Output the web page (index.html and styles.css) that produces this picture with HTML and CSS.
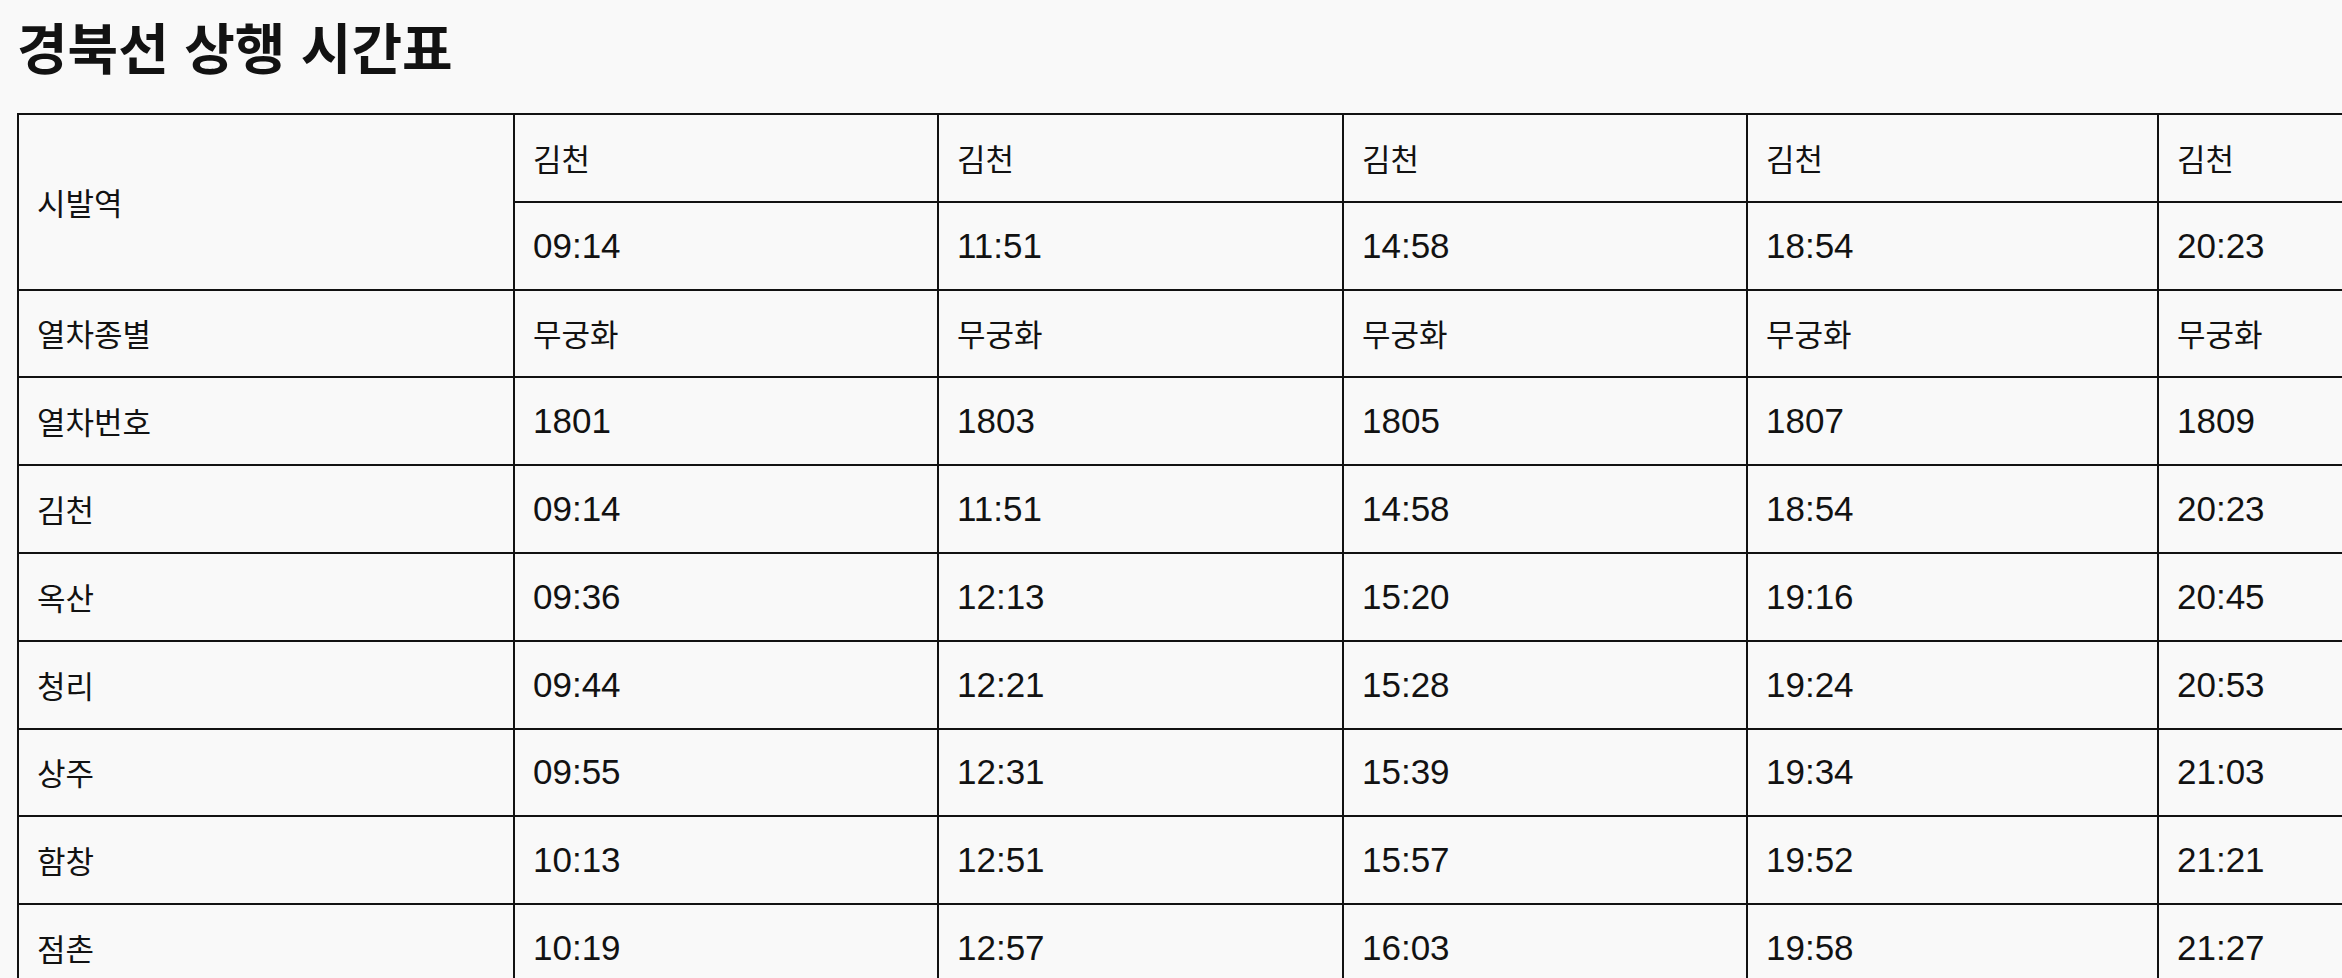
FILE: index.html
```html
<!DOCTYPE html>
<html lang="ko">
<head>
<meta charset="utf-8">
<title>경북선 상행 시간표</title>
<link rel="stylesheet" href="styles.css">
</head>
<body>
<main class="page">
  <h1 class="title">경북선 상행 시간표</h1>
  <div class="table-wrap">
    <table class="timetable">
      <colgroup>
        <col class="c1"><col class="c2"><col class="c3"><col class="c4"><col class="c5"><col class="c6">
      </colgroup>
      <tbody>
        <tr><td rowspan="2">시발역</td><td>김천</td><td>김천</td><td>김천</td><td>김천</td><td>김천</td></tr>
        <tr><td class="n">09:14</td><td class="n">11:51</td><td class="n">14:58</td><td class="n">18:54</td><td class="n">20:23</td></tr>
        <tr><td>열차종별</td><td>무궁화</td><td>무궁화</td><td>무궁화</td><td>무궁화</td><td>무궁화</td></tr>
        <tr><td>열차번호</td><td class="n">1801</td><td class="n">1803</td><td class="n">1805</td><td class="n">1807</td><td class="n">1809</td></tr>
        <tr><td>김천</td><td class="n">09:14</td><td class="n">11:51</td><td class="n">14:58</td><td class="n">18:54</td><td class="n">20:23</td></tr>
        <tr><td>옥산</td><td class="n">09:36</td><td class="n">12:13</td><td class="n">15:20</td><td class="n">19:16</td><td class="n">20:45</td></tr>
        <tr><td>청리</td><td class="n">09:44</td><td class="n">12:21</td><td class="n">15:28</td><td class="n">19:24</td><td class="n">20:53</td></tr>
        <tr><td>상주</td><td class="n">09:55</td><td class="n">12:31</td><td class="n">15:39</td><td class="n">19:34</td><td class="n">21:03</td></tr>
        <tr><td>함창</td><td class="n">10:13</td><td class="n">12:51</td><td class="n">15:57</td><td class="n">19:52</td><td class="n">21:21</td></tr>
        <tr><td>점촌</td><td class="n">10:19</td><td class="n">12:57</td><td class="n">16:03</td><td class="n">19:58</td><td class="n">21:27</td></tr>
      </tbody>
    </table>
  </div>
</main>
</body>
</html>
```
FILE: styles.css
```css
html, body {
  margin: 0;
  padding: 0;
  background: #f9f9f9;
  overflow: hidden;
}

body {
  color: #121212;
  font-family: "Noto Sans CJK KR", "Noto Sans", sans-serif;
}

.page {
  padding: 0 0 0 17px;
}

.title {
  margin: 0;
  padding-top: 14px;
  font-size: 55px;
  line-height: 62px;
  font-weight: 700;
  color: #121212;
}

.table-wrap {
  margin-top: 37px;
}

.timetable {
  border-collapse: collapse;
  table-layout: fixed;
  width: 2560px;
}

.c1 { width: 496px; }
.c2 { width: 424px; }
.c3 { width: 405px; }
.c4 { width: 404px; }
.c5 { width: 411px; }
.c6 { width: 420px; }

.timetable td {
  border: 2px solid #121212;
  height: 87.8px;
  padding: 0 18px;
  box-sizing: border-box;
  font-size: 31px;
  line-height: 40px;
  vertical-align: middle;
  text-align: left;
  white-space: nowrap;
}

.timetable td.n {
  font-family: "Liberation Sans", Arial, sans-serif;
  font-size: 35px;
}
```
